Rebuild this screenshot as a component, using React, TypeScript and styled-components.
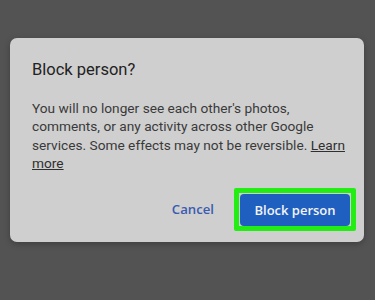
import React from "react";
import styled, { createGlobalStyle } from "styled-components";

const Global = createGlobalStyle`
  html, body { margin: 0; padding: 0; background: #535353; }
  body { width: 375px; height: 300px; overflow: hidden; font-family: Roboto, "Liberation Sans", sans-serif; }
`;

const Page = styled.div`
  width: 375px;
  height: 300px;
  box-sizing: border-box;
  padding: 38px 11px 0 10px;
`;

const Dialog = styled.div`
  height: 204px;
  box-sizing: border-box;
  background: #cfcfcf;
  border-radius: 7px;
  padding: 21px 20px 0 22px;
  display: flex;
  flex-direction: column;
  box-shadow: 0 2px 6px rgba(0,0,0,0.25);
`;

const Title = styled.h2`
  margin: 0;
  font-family: Roboto, "Open Sans", sans-serif;
  font-weight: 400;
  font-size: 16.5px;
  line-height: 22px;
  color: #222;
`;

const Body = styled.p`
  margin: 18px -8px 0 0;
  font-size: 13.7px;
  line-height: 18.4px;
  color: #3a3a3a;
`;

const Link = styled.a`
  color: #2f2f2f;
  text-decoration: underline;
`;

const Actions = styled.div`
  margin-top: 15px;
  display: flex;
  justify-content: flex-end;
  align-items: center;
  gap: 20px;
`;

const TextButton = styled.button`
  border: none;
  background: none;
  padding: 0;
  font-family: "Open Sans", Roboto, sans-serif;
  font-weight: 600;
  font-size: 13.2px;
  color: #3a5bb0;
`;

const Highlight = styled.div`
  border: 5px solid #22ee14;
  border-radius: 2px;
  padding: 1px 1px 0 1px;
  margin-right: -12px;
`;

const PrimaryButton = styled.button`
  width: 110px;
  height: 32px;
  border: none;
  border-radius: 4px;
  background: #1f5fc0;
  color: #f4f4f4;
  font-family: "Open Sans", Roboto, sans-serif;
  font-weight: 600;
  font-size: 13px;
  display: block;
`;

export default function App() {
  return (
    <>
      <Global />
      <Page>
        <Dialog>
          <Title>Block person?</Title>
          <Body>
            You will no longer see each other's photos, comments, or any activity across other Google
            services. Some effects may not be reversible. <Link>Learn more</Link>
          </Body>
          <Actions>
            <TextButton>Cancel</TextButton>
            <Highlight>
              <PrimaryButton>Block person</PrimaryButton>
            </Highlight>
          </Actions>
        </Dialog>
      </Page>
    </>
  );
}
